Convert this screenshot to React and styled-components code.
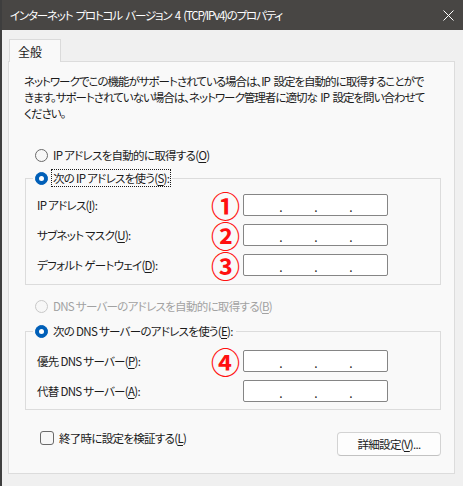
import React from "react";
import styled, { createGlobalStyle } from "styled-components";

const FONT = `"Noto Sans CJK JP", "Noto Sans", sans-serif`;

const GlobalStyle = createGlobalStyle`
  html, body { margin: 0; padding: 0; background: #efefef; }
  body {
    font-family: ${FONT};
    font-size: 11.5px;
    letter-spacing: -0.7px;
    color: #1b1b1b;
    font-feature-settings: "palt" 1;
  }
  * { box-sizing: border-box; }
`;

const Window = styled.div`
  width: 463px;
  height: 486px;
  overflow: hidden;
  background: #f0f0f0;
  border-left: 2px solid #3e3e3e;
  display: flex;
  flex-direction: column;
`;

const TitleBar = styled.div`
  flex: none;
  height: 30px;
  background: #484644;
  color: #ffffff;
  display: flex;
  align-items: center;
  justify-content: space-between;
  padding: 0 9px 0 8px;
`;

const Title = styled.span`
  white-space: nowrap;
  letter-spacing: -1.2px;
  word-spacing: 2px;
`;

const Body = styled.div`
  flex: 1;
  padding: 9px 8px 0 6px;
  display: flex;
  flex-direction: column;
`;

const TabStrip = styled.div`
  display: flex;
`;

const Tab = styled.div`
  position: relative;
  z-index: 1;
  width: 52px;
  height: 23px;
  margin-left: 1px;
  margin-bottom: -1px;
  padding-left: 8px;
  display: flex;
  align-items: center;
  background: #f9f9f9;
  border: 1px solid #dadada;
  border-bottom: none;
  font-size: 12px;
  letter-spacing: 0;
`;

const Panel = styled.div`
  width: 447px;
  height: 413px;
  flex: none;
  background: #f9f9f9;
  border: 1px solid #dcdcdc;
  padding: 11px 14px 0 15px;
  display: flex;
  flex-direction: column;
`;

const Description = styled.p`
  margin: 0;
  line-height: 16px;
  white-space: nowrap;
  letter-spacing: -1px;
  word-spacing: 2px;
`;

const Option = styled.label`
  display: flex;
  align-items: center;
  gap: 4px;
  height: 18px;
  margin-left: ${(p) => p.$indent ?? 11}px;
  margin-top: ${(p) => p.$top || 0}px;
  color: ${(p) => (p.$disabled ? "#a2a2a2" : "#1b1b1b")};
  white-space: nowrap;
`;

const RadioDot = styled.span`
  flex: none;
  width: 13px;
  height: 13px;
  border-radius: 50%;
  background: ${(p) => (p.$checked ? "#005fb8" : "#f7f7f7")};
  border: 1px solid
    ${(p) => (p.$checked ? "#005fb8" : p.$disabled ? "#c8c8c8" : "#6a6a6a")};
  display: flex;
  align-items: center;
  justify-content: center;
  &::after {
    content: "";
    display: ${(p) => (p.$checked ? "block" : "none")};
    width: 5px;
    height: 5px;
    border-radius: 50%;
    background: #ffffff;
  }
`;

const CheckBox = styled.span`
  flex: none;
  width: 14px;
  height: 14px;
  border-radius: 3px;
  border: 1px solid #6a6a6a;
  background: #f7f7f7;
`;

const OptionText = styled.span`
  padding: 0 1px;
  outline: ${(p) => (p.$focused ? "1px dotted #1b1b1b" : "none")};
  line-height: 16px;
`;

const Key = styled.u`
  text-underline-offset: 2px;
`;

const Group = styled.fieldset`
  margin: ${(p) => p.$top || 0}px 0 0 1px;
  width: 416px;
  border: 1px solid #dcdcdc;
  padding: 0 0 ${(p) => p.$bottom || 8}px 7px;
  display: flex;
  flex-direction: column;
  gap: 8px;
`;

const Legend = styled.legend`
  padding: 0 2px;
  margin-left: 0;
`;

const FieldRow = styled.div`
  display: grid;
  grid-template-columns: 174px 32px 145px;
  align-items: center;
  height: 22px;
  padding-left: 4px;
  margin-top: ${(p) => p.$top || 0}px;
`;

const FieldLabel = styled.span`
  white-space: nowrap;
`;

const Marker = styled.span`
  color: #ff1010;
  font-size: 29px;
  font-weight: 700;
  line-height: 22px;
  height: 22px;
  padding-right: 3px;
  text-align: center;
  letter-spacing: 0;
  font-feature-settings: normal;
`;

const IpBox = styled.div`
  grid-column: 3;
  height: 22px;
  background: #ffffff;
  border: 1px solid #858585;
  border-radius: 2px;
  padding-left: 3px;
  display: flex;
  align-items: flex-end;
`;

const Octet = styled.span`
  width: 33px;
`;

const Sep = styled.span`
  width: 2px;
  line-height: 14px;
  height: 15px;
  font-size: 12px;
  letter-spacing: 0;
  color: #1b1b1b;
  display: flex;
  justify-content: center;
  overflow: visible;
`;

const BottomRow = styled.div`
  display: flex;
  align-items: flex-start;
  justify-content: space-between;
  height: 27px;
  margin-top: 19px;
  width: 417px;
`;

const Button = styled.button`
  font-family: ${FONT};
  font-size: 11.5px;
  letter-spacing: -0.7px;
  color: #1b1b1b;
  font-feature-settings: "palt" 1;
  height: ${(p) => p.$h || 24}px;
  width: ${(p) => p.$w}px;
  margin-top: ${(p) => p.$top || 0}px;
  background: #fdfdfd;
  border: 1px solid ${(p) => (p.$primary ? "#005fb8" : "#d3d3d3")};
  border-bottom-color: ${(p) => (p.$primary ? "#005fb8" : "#c2c2c2")};
  border-radius: 4px;
  padding: 0;
  display: flex;
  align-items: center;
  justify-content: center;
`;

const Footer = styled.div`
  display: flex;
  justify-content: flex-end;
  gap: 10px;
  margin-top: 12px;
`;

function IpField() {
  return (
    <IpBox>
      <Octet />
      <Sep>.</Sep>
      <Octet />
      <Sep>.</Sep>
      <Octet />
      <Sep>.</Sep>
      <Octet />
    </IpBox>
  );
}

function Row({ label, k, marker, top }) {
  return (
    <FieldRow $top={top}>
      <FieldLabel>
        {label}(<Key>{k}</Key>):
      </FieldLabel>
      {marker ? <Marker>{marker}</Marker> : <span />}
      <IpField />
    </FieldRow>
  );
}

export default function App() {
  return (
    <>
      <GlobalStyle />
      <Window>
        <TitleBar>
          <Title>インターネット プロトコル バージョン 4 (TCP/IPv4)のプロパティ</Title>
          <svg width="11" height="11" viewBox="0 0 11 11">
            <path d="M0.5 0.5 L10.5 10.5 M10.5 0.5 L0.5 10.5" stroke="#ffffff" strokeWidth="1" />
          </svg>
        </TitleBar>
        <Body>
          <TabStrip>
            <Tab>全般</Tab>
          </TabStrip>
          <Panel>
            <Description>
              ネットワークでこの機能がサポートされている場合は、IP 設定を自動的に取得することがで
              <br />
              きます。サポートされていない場合は、ネットワーク管理者に適切な IP 設定を問い合わせて
              <br />
              ください。
            </Description>

            <Option $top={25}>
              <RadioDot />
              <OptionText>
                IP アドレスを自動的に取得する(<Key>O</Key>)
              </OptionText>
            </Option>

            <Group $top={5} $bottom={8}>
              <Legend>
                <Option $indent={0}>
                  <RadioDot $checked />
                  <OptionText $focused>
                    次の IP アドレスを使う(<Key>S</Key>):
                  </OptionText>
                </Option>
              </Legend>
              <Row label="IP アドレス" k="I" marker="①" top={7} />
              <Row label="サブネット マスク" k="U" marker="②" />
              <Row label="デフォルト ゲートウェイ" k="D" marker="③" />
            </Group>

            <Option $top={12} $disabled>
              <RadioDot $disabled />
              <OptionText>
                DNS サーバーのアドレスを自動的に取得する(<Key>B</Key>)
              </OptionText>
            </Option>

            <Group $top={7} $bottom={7}>
              <Legend>
                <Option $indent={0}>
                  <RadioDot $checked />
                  <OptionText>
                    次の DNS サーバーのアドレスを使う(<Key>E</Key>):
                  </OptionText>
                </Option>
              </Legend>
              <Row label="優先 DNS サーバー" k="P" marker="④" top={10} />
              <Row label="代替 DNS サーバー" k="A" />
            </Group>

            <BottomRow>
              <Option $indent={16}>
                <CheckBox />
                <OptionText>
                  終了時に設定を検証する(<Key>L</Key>)
                </OptionText>
              </Option>
              <Button $w={104} $top={3}>
                詳細設定(<Key>V</Key>)...
              </Button>
            </BottomRow>
          </Panel>
          <Footer>
            <Button $primary $w={85} $h={24}>OK</Button>
            <Button $w={84} $h={24}>キャンセル</Button>
          </Footer>
        </Body>
      </Window>
    </>
  );
}
